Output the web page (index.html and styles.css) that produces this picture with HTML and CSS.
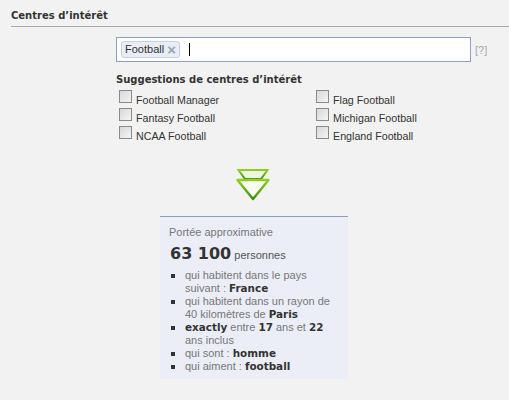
FILE: index.html
```html
<!DOCTYPE html>
<html lang="fr">

<head>
    <meta charset="UTF-8">
    <title>Centres d'intérêt</title>
    <link rel="stylesheet" href="styles.css">
</head>

<body>
    <h1 class="section-title">Centres d’intérêt</h1>
    <div class="section-body">
        <div class="input-row">
            <div class="token-input">
                <span class="token">Football <span class="token-x">×</span></span>
                <span class="caret"></span>
            </div>
            <span class="help">[?]</span>
        </div>
        <h2 class="suggest-title">Suggestions de centres d’intérêt</h2>
        <div class="suggest-grid">
            <label class="suggest"><span class="check"></span>Football Manager</label>
            <label class="suggest"><span class="check"></span>Flag Football</label>
            <label class="suggest"><span class="check"></span>Fantasy Football</label>
            <label class="suggest"><span class="check"></span>Michigan Football</label>
            <label class="suggest"><span class="check"></span>NCAA Football</label>
            <label class="suggest"><span class="check"></span>England Football</label>
        </div>
    </div>

    <svg class="arrow" width="36" height="34" viewBox="0 0 36 34">
        <defs>
            <linearGradient id="arrowStroke" x1="0" y1="0" x2="0" y2="1">
                <stop offset="0" stop-color="#8fd01e"/>
                <stop offset="1" stop-color="#3f8f10"/>
            </linearGradient>
        </defs>
        <path d="M3.5 3H32.5L26 12H10Z" fill="#eef5e2" stroke="url(#arrowStroke)" stroke-width="2"/>
        <path d="M2.5 13H33.5L18 32Z" fill="#f8fbf2" stroke="url(#arrowStroke)" stroke-width="2.4" stroke-linejoin="round"/>
    </svg>

    <div class="reach">
        <div class="reach-label">Portée approximative</div>
        <div class="reach-count"><strong>63 100</strong> personnes</div>
        <ul class="reach-list">
            <li>qui habitent dans le pays suivant : <b>France</b></li>
            <li>qui habitent dans un rayon de 40 kilomètres de <b>Paris</b></li>
            <li><b>exactly</b> entre <b>17</b> ans et <b>22</b> ans inclus</li>
            <li>qui sont : <b>homme</b></li>
            <li>qui aiment : <b>football</b></li>
        </ul>
    </div>
</body>

</html>
```

FILE: styles.css
```css
body {
    margin: 0;
    background-color: #f2f2f2;
    font-family: "Liberation Sans", Arial, sans-serif;
    font-size: 11px;
    color: #333;
}

b,
strong {
    color: #333;
}

.section-title {
    margin: 9px 0 0 11px;
    padding-bottom: 3px;
    border-bottom: 1px solid #aaa;
    font-family: "DejaVu Sans", sans-serif;
    font-size: 10px;
    line-height: 14px;
    font-weight: bold;
    color: #333;
}

.section-body {
    margin: 10px 0 0 116px;
}

.input-row {
    display: flex;
    align-items: flex-end;
}

.token-input {
    display: flex;
    align-items: center;
    width: 349px;
    height: 23px;
    padding: 0 0 0 4px;
    border: 1px solid #8d9fc4;
    background-color: #fff;
}

.token {
    display: flex;
    align-items: center;
    height: 15px;
    padding: 0 3px;
    gap: 3px;
    border: 1px solid #c6d0e6;
    border-radius: 3px;
    background-color: #e8edf7;
    line-height: 15px;
}

.token-x {
    font-size: 15px;
    font-weight: bold;
    color: #9aa4b8;
}

.caret {
    width: 1px;
    height: 13px;
    margin-left: 9px;
    background-color: #000;
}

.help {
    margin: 0 0 6px 4px;
    font-size: 11px;
    color: #aaa;
}

.suggest-title {
    margin: 11px 0 0;
    font-family: "DejaVu Sans", sans-serif;
    font-size: 10px;
    line-height: 14px;
    font-weight: bold;
    color: #333;
}

.suggest-grid {
    display: grid;
    grid-template-columns: 197px 1fr;
    grid-auto-rows: 18px;
    margin: 2px 0 0 3px;
    font-size: 10.7px;
}

.suggest {
    display: flex;
    align-items: flex-start;
    line-height: 20px;
    padding-top: 1px;
    box-sizing: border-box;
}

.check {
    width: 11px;
    height: 11px;
    margin: 0 4px 0 0;
    border: 1px solid #8a8a8a;
    background: linear-gradient(135deg, #d8d8d8, #f4f4f4);
    flex: none;
}

.arrow {
    display: block;
    margin: 24px 0 0 235px;
}

.reach {
    width: 188px;
    height: 163px;
    margin: 15px 0 0 160px;
    padding: 8px 0 0 9px;
    box-sizing: border-box;
    border-top: 1px solid #8d9fc4;
    background-color: #ebeef7;
    color: #777;
}

.reach-label {
    line-height: 15px;
}

.reach-count {
    margin-top: 2px;
    line-height: 24px;
    color: #555;
}

.reach-count strong {
    margin-left: 1px;
    font-family: "DejaVu Sans", sans-serif;
    font-size: 16px;
}

.reach-list {
    margin: 2px 0 0;
    padding: 0 14px 0 16px;
    list-style: square;
    line-height: 13px;
}

.reach-list li::marker {
    color: #333;
    font-size: 12px;
}

.reach-list b {
    font-family: "DejaVu Sans", sans-serif;
    font-size: 10.4px;
}
```
